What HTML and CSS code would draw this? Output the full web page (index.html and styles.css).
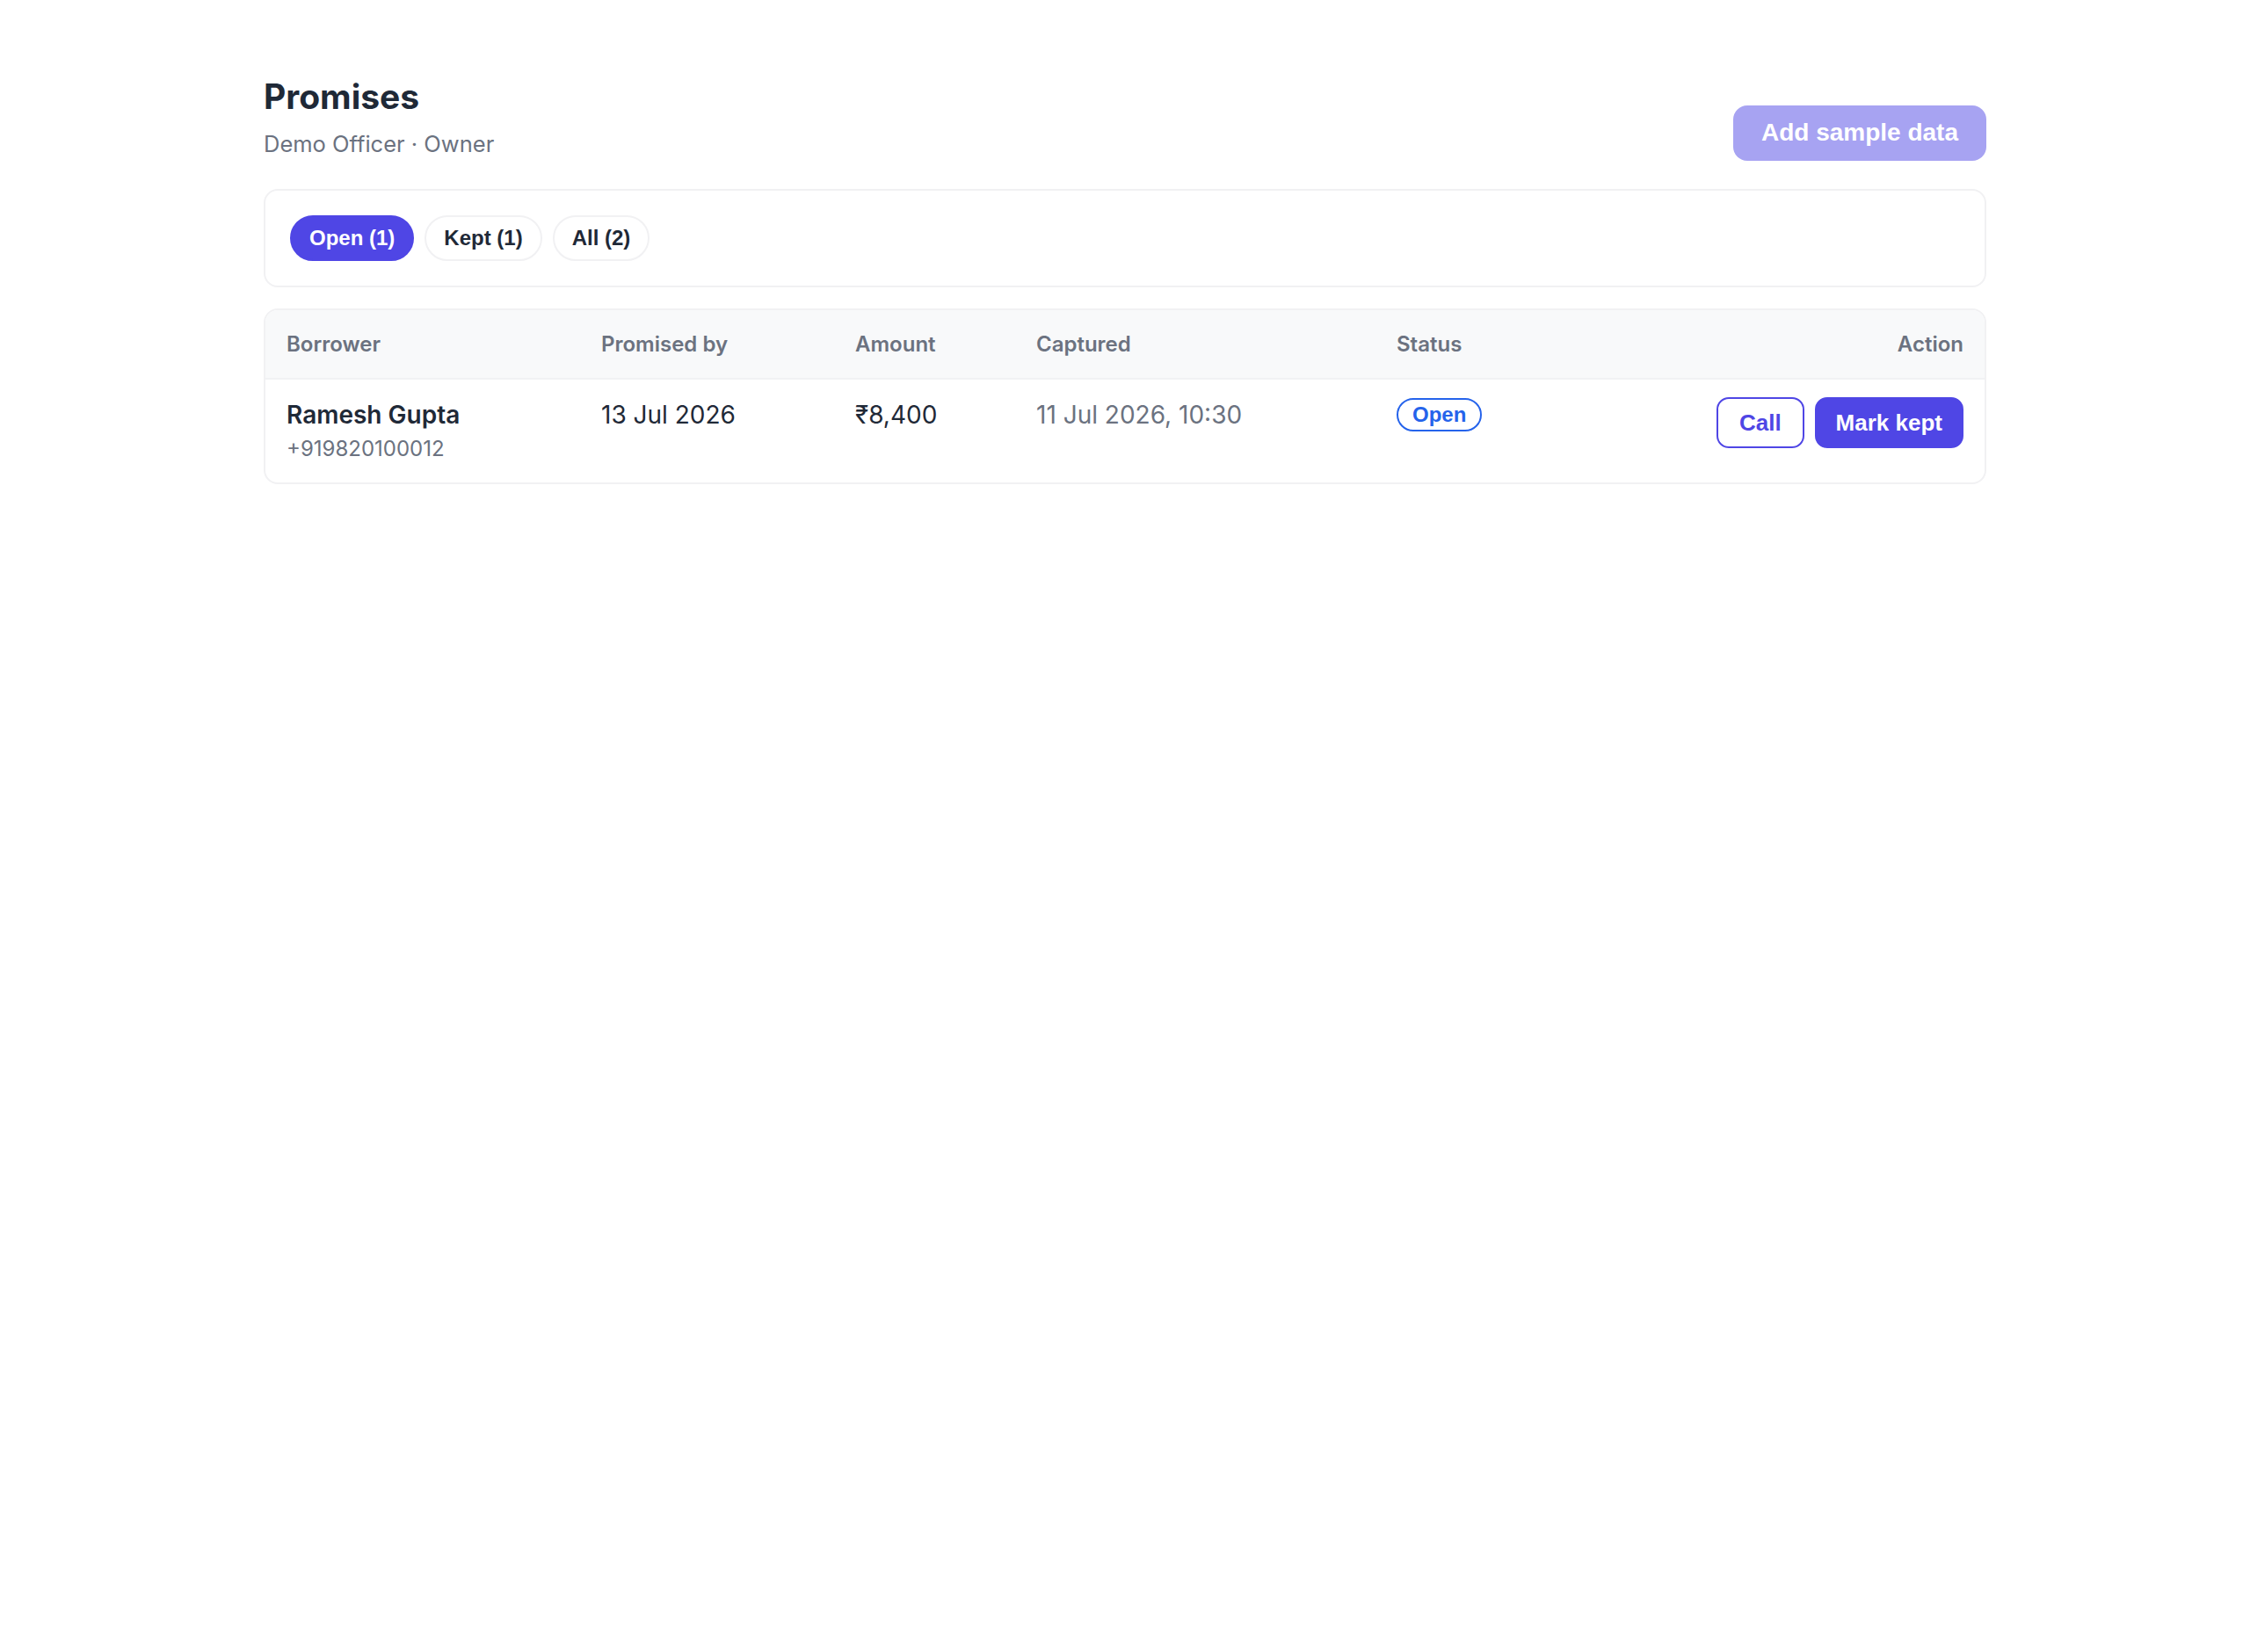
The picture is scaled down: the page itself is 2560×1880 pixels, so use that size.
FILE: index.html
```html
<!DOCTYPE html>
<html lang="en">
<head>
<meta charset="utf-8">
<title>Promises</title>
<link rel="stylesheet" href="styles.css">
</head>
<body>
<main class="page">
  <header class="page-head">
    <div class="titles">
      <h1 class="title">Promises</h1>
      <p class="subtitle">Demo Officer · Owner</p>
    </div>
    <button class="btn btn-sample">Add sample data</button>
  </header>

  <section class="card tabs">
    <button class="pill pill-active">Open (1)</button>
    <button class="pill">Kept (1)</button>
    <button class="pill">All (2)</button>
  </section>

  <section class="card table-card">
    <table class="grid">
      <colgroup>
        <col class="c-borrower">
        <col class="c-promised">
        <col class="c-amount">
        <col class="c-captured">
        <col class="c-status">
        <col class="c-action">
      </colgroup>
      <thead>
        <tr>
          <th>Borrower</th>
          <th>Promised by</th>
          <th>Amount</th>
          <th>Captured</th>
          <th>Status</th>
          <th class="right">Action</th>
        </tr>
      </thead>
      <tbody>
        <tr>
          <td>
            <div class="name">Ramesh Gupta</div>
            <div class="phone">+919820100012</div>
          </td>
          <td class="main">13 Jul 2026</td>
          <td class="main">₹8,400</td>
          <td class="muted">11 Jul 2026, 10:30</td>
          <td><span class="badge">Open</span></td>
          <td class="right">
            <div class="actions">
              <button class="btn btn-outline">Call</button>
              <button class="btn btn-primary">Mark kept</button>
            </div>
          </td>
        </tr>
      </tbody>
    </table>
  </section>
</main>
</body>
</html>
```

FILE: styles.css
```css
* { box-sizing: border-box; }

body {
  margin: 0;
  background: #ffffff;
  font-family: Inter, "Noto Sans", sans-serif;
  color: #1f2937;
}

.page {
  width: 1960px;
  margin: 0 auto;
  padding-top: 86px;
}

.page-head {
  display: flex;
  justify-content: space-between;
  align-items: flex-end;
  margin-bottom: 34px;
}

.title {
  margin: 0;
  font-size: 39px;
  line-height: 48px;
  font-weight: 700;
  color: #1f2937;
}

.subtitle {
  margin: 12px 0 0;
  font-size: 25.5px;
  line-height: 35px;
  color: #6b7280;
}

.btn {
  font-family: "Liberation Sans", Arial, sans-serif;
  font-weight: 700;
  cursor: pointer;
}

.btn-sample {
  background: #a7a3f2;
  color: #ffffff;
  border: 0;
  border-radius: 16px;
  font-size: 28px;
  line-height: 32px;
  padding: 15px 32px 16px;
  margin-bottom: -2px;
}

.card {
  border: 2px solid #f1f1f3;
  border-radius: 16px;
  background: #ffffff;
}

.tabs {
  display: flex;
  gap: 12px;
  padding: 28px;
  margin-bottom: 24px;
}

.pill {
  font-family: "Liberation Sans", Arial, sans-serif;
  font-weight: 700;
  font-size: 24px;
  line-height: 28px;
  padding: 10px 20px;
  border: 2px solid #f1f1f3;
  border-radius: 999px;
  background: #ffffff;
  color: #1f2937;
}

.pill-active {
  background: #4f46e5;
  border-color: #4f46e5;
  color: #ffffff;
}

.table-card {
  overflow: hidden;
}

.grid {
  width: 100%;
  border-collapse: collapse;
  table-layout: fixed;
}

.c-borrower { width: 358px; }
.c-promised { width: 289px; }
.c-amount { width: 206px; }
.c-captured { width: 410px; }
.c-status { width: 300px; }

.grid th {
  background: #f8f9fa;
  text-align: left;
  font-size: 24px;
  line-height: 29px;
  font-weight: 600;
  color: #6b7280;
  padding: 24px;
  border-bottom: 2px solid #f1f2f4;
}

.grid td {
  vertical-align: top;
  padding: 20px 24px;
  font-size: 28px;
  line-height: 40px;
}

.grid .right { text-align: right; }

.name {
  font-weight: 600;
  color: #1f2937;
}

.phone {
  font-size: 24px;
  line-height: 37px;
  color: #6b7280;
}

.main { color: #1f2937; }
.muted { color: #6b7280; }

.badge {
  display: inline-block;
  font-family: "Liberation Sans", Arial, sans-serif;
  font-weight: 700;
  font-size: 24px;
  line-height: 28px;
  padding: 3px 16px;
  border: 2px solid #2563eb;
  border-radius: 999px;
  color: #2563eb;
  vertical-align: top;
  margin-top: 1px;
}

.actions {
  display: flex;
  justify-content: flex-end;
  gap: 12px;
}

.btn-outline,
.btn-primary {
  font-size: 26px;
  line-height: 30px;
  padding: 12px 22px;
  border: 2px solid #4f46e5;
  border-radius: 14px;
}

.btn-outline {
  background: #ffffff;
  color: #4f46e5;
  padding: 12px 24px;
}

.btn-primary {
  background: #4f46e5;
  color: #ffffff;
}
```
